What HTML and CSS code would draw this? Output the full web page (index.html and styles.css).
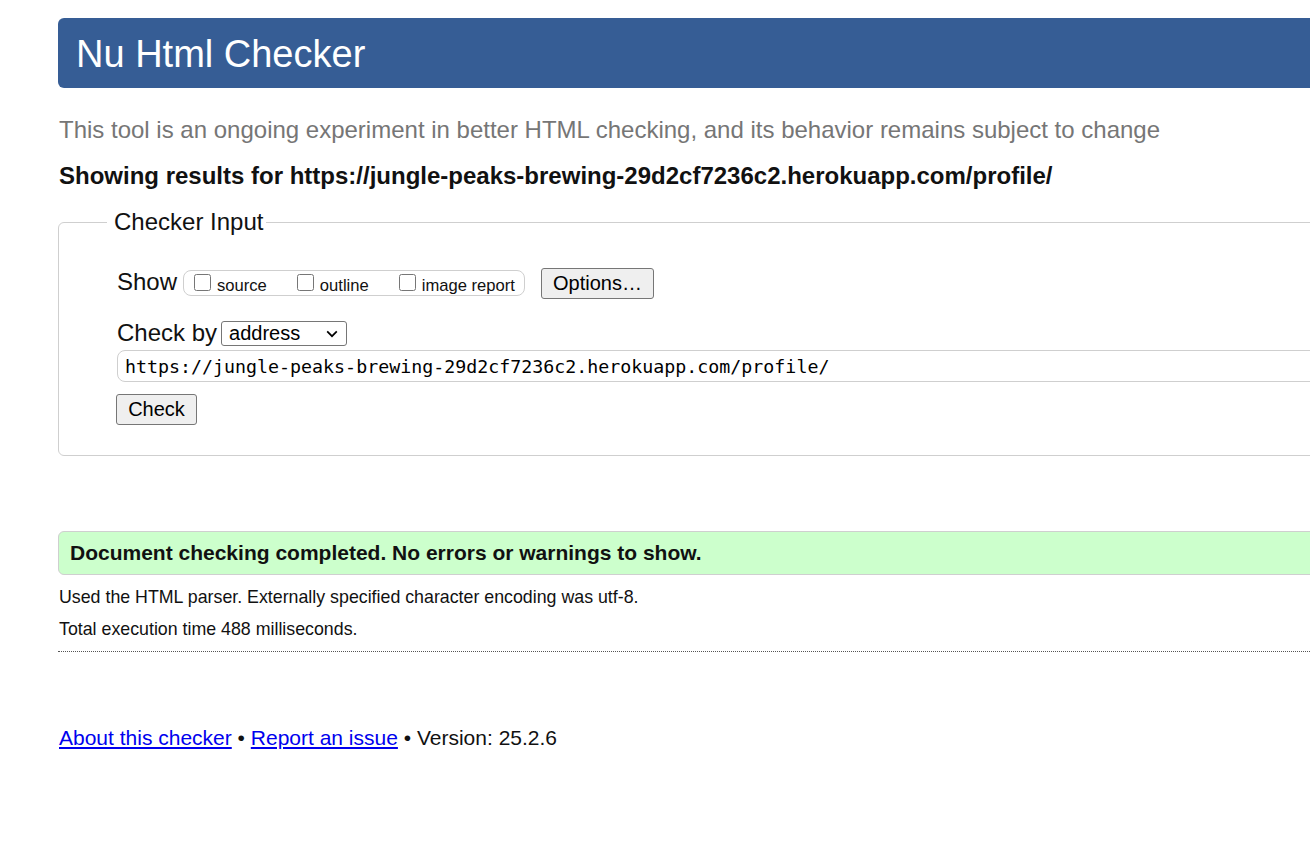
FILE: index.html
```html
<!DOCTYPE html>
<html lang="en">
<head>
<meta charset="utf-8">
<title>Showing results for https://jungle-peaks-brewing-29d2cf7236c2.herokuapp.com/profile/ - Nu Html Checker</title>
<link rel="stylesheet" href="styles.css">
</head>
<body>
<div class="page">
  <h1 class="banner">Nu Html Checker</h1>
  <p class="intro">This tool is an ongoing experiment in better HTML checking, and its behavior remains subject to change</p>
  <p class="showing">Showing results for https://jungle-peaks-brewing-29d2cf7236c2.herokuapp.com/profile/</p>

  <fieldset class="checker">
    <legend class="checker-legend">Checker Input</legend>
    <div class="checker-body">
      <div class="row show-row">
        <span class="lbl">Show</span>
        <span class="opts">
          <label class="opt"><input type="checkbox" class="cb"><span>source</span></label>
          <label class="opt"><input type="checkbox" class="cb"><span>outline</span></label>
          <label class="opt"><input type="checkbox" class="cb"><span>image report</span></label>
        </span>
        <button class="btn options-btn" type="button">Options…</button>
      </div>
      <div class="row checkby-row">
        <span class="lbl">Check by</span>
        <span class="sel-wrap">
          <select class="sel"><option>address</option></select>
          <svg class="chev" width="12" height="8" viewBox="0 0 12 8" aria-hidden="true"><path d="M1.2 1.4 L6 6.2 L10.8 1.4" fill="none" stroke="#000" stroke-width="1.7"/></svg>
        </span>
      </div>
      <input class="url" type="text" value="https://jungle-peaks-brewing-29d2cf7236c2.herokuapp.com/profile/">
      <div class="row">
        <button class="btn check-btn" type="button">Check</button>
      </div>
    </div>
  </fieldset>

  <p class="success">Document checking completed. No errors or warnings to show.</p>
  <p class="details first">Used the HTML parser. Externally specified character encoding was utf-8.</p>
  <p class="details">Total execution time 488 milliseconds.</p>
  <hr class="dotted">

  <p class="footer"><a href="#">About this checker</a> • <a href="#">Report an issue</a> • Version: 25.2.6</p>
</div>
</body>
</html>
```
FILE: styles.css
```css
html {
  overflow: hidden;
}
body {
  margin: 0;
  padding: 18px 0 0 58px;
  background: #fff;
  font-family: "Liberation Sans", Arial, sans-serif;
  color: #111;
}
.page {
  width: 1400px;
}
.banner {
  margin: 0;
  height: 70px;
  box-sizing: border-box;
  padding: 15px 0 0 18px;
  background: #365d95;
  color: #fff;
  font-weight: normal;
  font-size: 38px;
  line-height: 42px;
  border-radius: 6px 0 0 6px;
}
.intro {
  margin: 28px 0 0 1px;
  color: #767676;
  font-size: 24px;
  line-height: 28px;
}
.showing {
  margin: 18px 0 0 1px;
  font-weight: bold;
  font-size: 24px;
  line-height: 28px;
  color: #111;
}
.checker {
  margin: 18px 0 0 0;
  padding: 20px 0 30px 0;
  border: 1px solid #cfcfcf;
  border-radius: 6px 0 0 6px;
  min-inline-size: 0;
}
.checker-legend {
  margin-left: 48px;
  padding: 0 3px 0 7px;
  font-size: 24px;
  line-height: 28px;
  color: #111;
}
.checker-body {
  padding-left: 58px;
}
.row {
  display: flex;
  align-items: center;
}
.lbl {
  font-size: 24px;
  line-height: 28px;
  color: #111;
}
.show-row {
  margin-top: 12px;
  align-items: flex-start;
}
.opts {
  display: inline-flex;
  align-items: center;
  margin: 2px 0 0 6px;
  height: 26px;
  box-sizing: border-box;
  padding: 0 9px 0 10px;
  border: 1px solid #cfcfcf;
  border-radius: 8px;
  gap: 30px;
}
.opt {
  display: inline-flex;
  align-items: center;
  font-size: 16.6px;
  color: #111;
}
.opt span {
  margin-top: 5px;
}
.cb {
  margin: -2px 6px 0 0;
  width: 17px;
  height: 17px;
}
.btn {
  font-family: "Liberation Sans", Arial, sans-serif;
  font-size: 20px;
  color: #000;
  background: #efefef;
  border: 1px solid #767676;
  border-radius: 3px;
  padding: 0 10px;
  height: 31px;
}
.options-btn {
  margin-left: 16px;
  width: 113px;
}
.checkby-row {
  margin-top: 20px;
}
.sel-wrap {
  position: relative;
  display: inline-block;
  margin-left: 4px;
  height: 25px;
}
.sel {
  appearance: none;
  -webkit-appearance: none;
  display: block;
  width: 126px;
  height: 25px;
  box-sizing: border-box;
  padding: 0 0 0 7px;
  font-family: "Liberation Sans", Arial, sans-serif;
  font-size: 20px;
  line-height: 23px;
  color: #000;
  border: 1px solid #767676;
  border-radius: 3px;
  background: #fff;
}
.chev {
  position: absolute;
  right: 9px;
  top: 9px;
  pointer-events: none;
}
.url {
  display: block;
  margin-top: 3px;
  width: 1300px;
  height: 32px;
  box-sizing: border-box;
  padding: 0 7px;
  font-family: "DejaVu Sans Mono", "Liberation Mono", monospace;
  font-size: 18.3px;
  color: #000;
  border: 1px solid #cfcfcf;
  border-radius: 8px;
}
.check-btn {
  margin-top: 12px;
  margin-left: -1px;
  width: 81px;
}
.success {
  margin: 75px 0 0 0;
  height: 44px;
  box-sizing: border-box;
  padding: 0 0 0 11px;
  display: flex;
  align-items: center;
  background: #ccffcc;
  border: 1px solid #cfcfcf;
  border-radius: 6px 0 0 6px;
  font-weight: bold;
  font-size: 21px;
  color: #111;
}
.details {
  margin: 11px 0 0 1px;
  font-size: 17.8px;
  line-height: 21px;
  color: #111;
}
.details.first {
  margin-top: 12px;
}
.dotted {
  margin: 11px 0 0 0;
  border: 0;
  border-top: 1px dotted #555;
  height: 0;
}
.footer {
  margin: 74px 0 0 1px;
  font-size: 21px;
  line-height: 24px;
  color: #111;
}
.footer a {
  color: #0000ee;
}
```
